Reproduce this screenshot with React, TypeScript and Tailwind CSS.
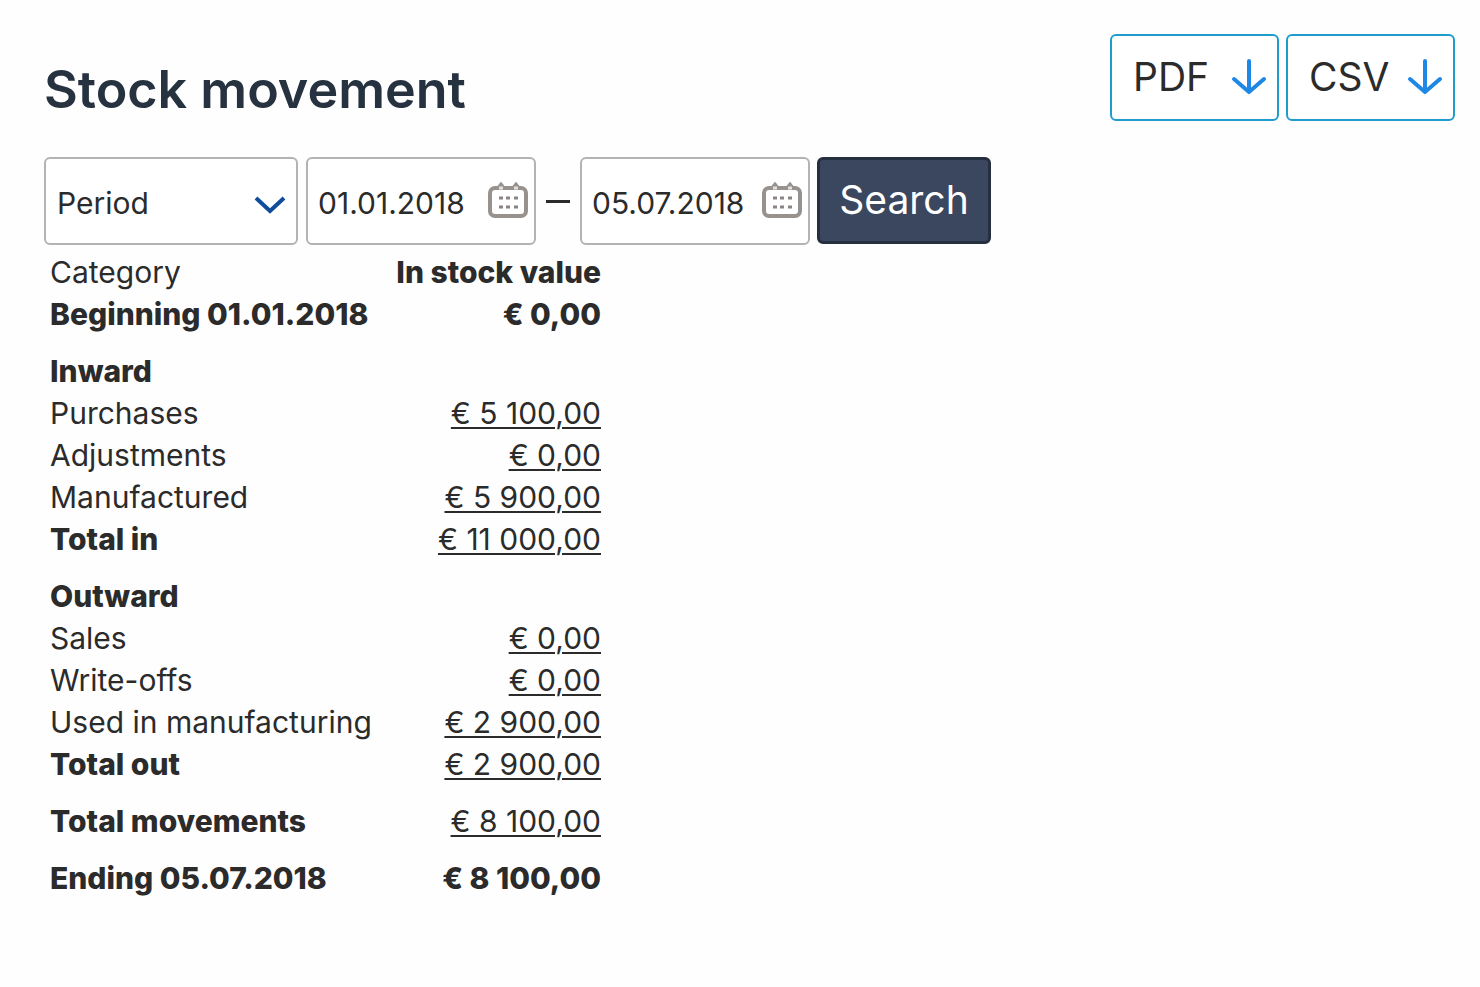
import { useState } from "react";

interface Row {
    label: string;
    value?: string;
    boldLabel?: boolean;
    boldValue?: boolean;
}

const groups: Row[][] = [
    [{ label: "Beginning 01.01.2018", value: "€ 0,00", boldLabel: true, boldValue: true }],
    [
        { label: "Inward", boldLabel: true },
        { label: "Purchases", value: "€ 5 100,00" },
        { label: "Adjustments", value: "€ 0,00" },
        { label: "Manufactured", value: "€ 5 900,00" },
        { label: "Total in", value: "€ 11 000,00", boldLabel: true },
    ],
    [
        { label: "Outward", boldLabel: true },
        { label: "Sales", value: "€ 0,00" },
        { label: "Write-offs", value: "€ 0,00" },
        { label: "Used in manufacturing", value: "€ 2 900,00" },
        { label: "Total out", value: "€ 2 900,00", boldLabel: true },
    ],
    [{ label: "Total movements", value: "€ 8 100,00", boldLabel: true }],
    [{ label: "Ending 05.07.2018", value: "€ 8 100,00", boldLabel: true, boldValue: true }],
];

function CalendarIcon() {
    return (
        <svg viewBox="0 0 40 40" className="h-10 w-10" fill="none" aria-hidden="true">
            <rect x="2" y="7" width="36" height="28" rx="5" stroke="#98928e" strokeWidth="4" />
            <path d="M13 2l3 4h-6zM28 2l3 4h-6z" fill="#98928e" stroke="#98928e" strokeWidth="2" strokeLinejoin="round" />
            <path d="M11 7h4M26 7h4" stroke="#e2dfdd" strokeWidth="3" />
            <path
                d="M11 17h4M18 17h4M26 17h4M11 26h4M18 26h4M26 26h4"
                stroke="#8c8482"
                strokeWidth="3"
            />
        </svg>
    );
}

function DownloadButton({ label }: { label: string }) {
    return (
        <button
            type="button"
            className="flex h-[87px] w-[169px] items-center justify-between rounded-md border-2 border-[#1f9ccb] bg-white pr-[9px] pl-[21px] text-[39px] text-[#2b2b2b]"
        >
            {label}
            <svg viewBox="0 0 38 40" className="h-10 w-[38px]" fill="none" aria-hidden="true">
                <path
                    d="M19 3v31M4 21l15 13 15-13"
                    stroke="#1e88e5"
                    strokeWidth="4"
                    strokeLinecap="round"
                    strokeLinejoin="round"
                />
            </svg>
        </button>
    );
}

interface DateFieldProps {
    label: string;
    value: string;
    onChange: (value: string) => void;
}

function DateField({ label, value, onChange }: DateFieldProps) {
    return (
        <div className="flex h-[88px] w-[230px] items-center rounded-md border-2 border-[#b3b3b3] bg-white pr-1.5 pl-2.5">
            <input
                type="text"
                aria-label={label}
                value={value}
                onChange={(e) => onChange(e.target.value)}
                className="h-full w-full min-w-0 bg-transparent pt-1 text-[30px] outline-none"
            />
            <button type="button" aria-label={`Pick ${label.toLowerCase()}`} className="shrink-0">
                <CalendarIcon />
            </button>
        </div>
    );
}

export default function App() {
    const [from, setFrom] = useState("01.01.2018");
    const [to, setTo] = useState("05.07.2018");

    return (
        <main className="min-h-screen bg-[#fefefe] pt-[34px] pr-[25px] pb-16 pl-11 font-[Inter,'Liberation_Sans',sans-serif] text-[#2b2b2b]">
            <header className="flex items-start justify-between">
                <h1 className="pt-6 text-[52px] leading-[64px] font-semibold text-[#26323f]">Stock movement</h1>
                <div className="flex gap-[7px]">
                    <DownloadButton label="PDF" />
                    <DownloadButton label="CSV" />
                </div>
            </header>

            <form className="mt-[35px] flex items-center" onSubmit={(e) => e.preventDefault()}>
                <div className="relative mr-2">
                    <select
                        aria-label="Range type"
                        className="h-[88px] w-[254px] appearance-none rounded-md border-2 border-[#b3b3b3] bg-white pt-1 pr-12 pl-[11px] text-[30px] outline-none"
                    >
                        <option>Period</option>
                    </select>
                    <svg
                        viewBox="0 0 32 20"
                        className="pointer-events-none absolute top-[38px] right-3 h-5 w-8"
                        fill="none"
                        aria-hidden="true"
                    >
                        <path d="M2 3l14 13L30 3" stroke="#0f4c9c" strokeWidth="4" />
                    </svg>
                </div>
                <DateField label="Start date" value={from} onChange={setFrom} />
                <span className="mx-2.5 h-[3px] w-6 bg-[#2b2b2b]" />
                <DateField label="End date" value={to} onChange={setTo} />
                <button
                    type="submit"
                    className="ml-[7px] h-[87px] w-[174px] self-start rounded-md border-3 border-[#252f40] bg-[#3a475e] text-[39px] text-white"
                >
                    Search
                </button>
            </form>

            <table className="mt-1.5 ml-1.5 w-[551px] text-[30px] leading-[42px]">
                <thead>
                    <tr>
                        <th scope="col" className="p-0 text-left font-normal">Category</th>
                        <th scope="col" className="p-0 text-right font-extrabold">In stock value</th>
                    </tr>
                </thead>
                {groups.map((rows, i) => (
                    <tbody key={rows[0].label}>
                        {rows.map((row, j) => {
                            const pad = i > 0 && j === 0 ? "pt-[15px]" : "pt-0";
                            return (
                                <tr key={row.label}>
                                    <th
                                        scope="row"
                                        className={`${pad} text-left whitespace-nowrap ${row.boldLabel ? "font-extrabold" : "font-normal"}`}
                                    >
                                        {row.label}
                                    </th>
                                    <td className={`${pad} text-right whitespace-nowrap`}>
                                        {row.value && row.boldValue && <span className="font-extrabold">{row.value}</span>}
                                        {row.value && !row.boldValue && (
                                            <a href="#" className="underline decoration-2 underline-offset-3">
                                                {row.value}
                                            </a>
                                        )}
                                    </td>
                                </tr>
                            );
                        })}
                    </tbody>
                ))}
            </table>
        </main>
    );
}
